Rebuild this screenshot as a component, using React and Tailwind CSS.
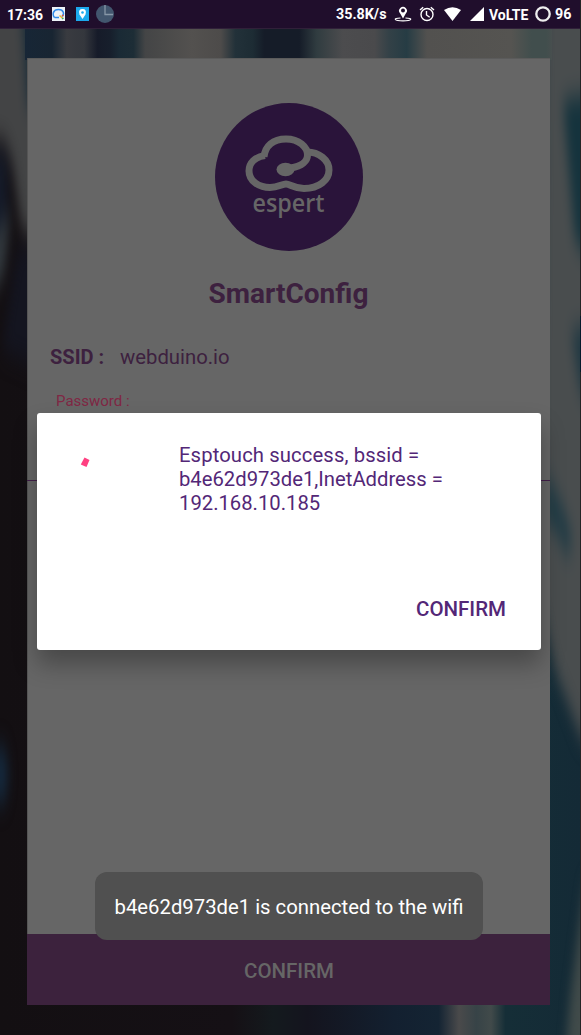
function Backdrop() {
  return (
    <svg className="absolute inset-0 h-full w-full" viewBox="0 0 581 1035" aria-hidden="true">
      <defs>
        <filter id="soft" x="-100%" y="-20%" width="300%" height="140%" colorInterpolationFilters="sRGB"><feGaussianBlur stdDeviation="5 12" /></filter>
        <linearGradient id="base" x1="0" x2="581" y1="0" y2="0" gradientUnits="userSpaceOnUse">
          <stop offset="0" stopColor="#130f12" />
          <stop offset=".4" stopColor="#151015" />
          <stop offset=".47" stopColor="#141a1e" />
          <stop offset=".53" stopColor="#14141e" />
          <stop offset=".68" stopColor="#132030" />
          <stop offset=".755" stopColor="#142433" />
          <stop offset=".79" stopColor="#4a4a4b" />
          <stop offset=".82" stopColor="#374347" />
          <stop offset=".845" stopColor="#414a4a" />
          <stop offset=".87" stopColor="#152e37" />
          <stop offset="1" stopColor="#142a36" />
        </linearGradient>
        <linearGradient id="top" x1="0" x2="581" y1="0" y2="0" gradientUnits="userSpaceOnUse">
          <stop offset="0" stopColor="#3d3e41" />
          <stop offset=".024" stopColor="#454545" />
          <stop offset=".04" stopColor="#172636" />
          <stop offset=".09" stopColor="#182532" />
          <stop offset=".115" stopColor="#393b40" />
          <stop offset=".145" stopColor="#34373d" />
          <stop offset=".168" stopColor="#161b29" />
          <stop offset=".19" stopColor="#171f2c" />
          <stop offset=".205" stopColor="#1a2a35" />
          <stop offset=".23" stopColor="#1d2d36" />
          <stop offset=".25" stopColor="#444546" />
          <stop offset=".33" stopColor="#53514f" />
          <stop offset=".38" stopColor="#4d4b4a" />
          <stop offset=".405" stopColor="#223139" />
          <stop offset=".435" stopColor="#1d2c34" />
          <stop offset=".455" stopColor="#151c28" />
          <stop offset=".515" stopColor="#151c28" />
          <stop offset=".545" stopColor="#303c40" />
          <stop offset=".59" stopColor="#4c4c4e" />
          <stop offset=".645" stopColor="#4a4a4c" />
          <stop offset=".67" stopColor="#334147" />
          <stop offset=".7" stopColor="#263c44" />
          <stop offset=".735" stopColor="#52514f" />
          <stop offset=".88" stopColor="#555451" />
          <stop offset=".915" stopColor="#414e4d" />
          <stop offset=".94" stopColor="#414e4d" />
          <stop offset=".96" stopColor="#4f5050" />
          <stop offset="1" stopColor="#525253" />
        </linearGradient>
      </defs>
      <rect width="581" height="1035" fill="url(#base)" />
      <g filter="url(#soft)">
        <path d="M-20 -20H45V240L22 230 12 160 4 140H-20Z" fill="#434445" />
        <path d="M20 -20H45V105L28 110Z" fill="#172b38" />
        <path d="M-20 150 7 155 8 220 -3 260H-20Z" fill="#151b29" />
        <path d="M11 210 4 275 -12 300V245Z" fill="#333a3f" />
        <path d="M18 247H45V370L2 350Z" fill="#141520" />
        <path d="M545 -20H610V765L580 735 555 670 540 600Z" fill="#494d4e" />
        <path d="M563 100 610 90V285L575 240Z" fill="#15333d" />
        <path d="M571 330 610 320V435L580 390Z" fill="#203842" />
        <path d="M545 470 562 505 572 535 569 560 558 535 545 520Z" fill="#203b45" />
        <ellipse cx="0" cy="775" rx="8" ry="30" fill="#15293d" />
        <path d="M585 885 570 1000 565 1060H610V885Z" fill="#414b4a" />
      </g>
      <rect x="25" width="527" height="60" fill="url(#top)" />
      <path d="M580 0V1035H581V0Z" fill="#242526" />
      <path d="M580 316h1v56h-1z" fill="#071a2b" />
    </svg>
  );
}

function StatusBar() {
  return (
    <header className="relative flex h-[29px] w-[580px] shrink-0 items-center justify-between border-b border-[#302039] bg-[#200e2c] text-[14.5px] font-bold leading-none text-white">
      <div className="flex items-center pl-[7px]">
        <span className="w-[45px] whitespace-nowrap pt-px text-[14px]">17:36</span>
        <svg className="h-[14px] w-[13px]" viewBox="0 0 13 14">
          <path fill="#eef3f8" d="M0 0h13v14H0z" />
          <path d="M2.500 10.500C0 7.500 1 2.500 6.500 2.500c5.500 0 6 5 3.500 7M2.500 10.500h4.500" fill="none" stroke="#318be8" strokeWidth="1.500" />
          <path d="m7.500 8.500 3 2.500" stroke="#eab52e" strokeWidth="1.600" />
          <path d="m10 8 1.500 1" stroke="#e64c3d" strokeWidth="1.300" />
          <path d="m10 12 1.500-1" stroke="#38a85a" strokeWidth="1.300" />
        </svg>
        <svg className="ml-[11px] h-[14px] w-[13px]" viewBox="0 0 13 14">
          <path fill="#1ca9ed" d="M0 0h13v14H0z" />
          <path d="M6.500 12 3.500 7.500Q1.800 2 6.500 2t3 5.500Z" fill="white" />
          <circle cx="6.500" cy="5.500" r="1.300" fill="#1ca9ed" />
        </svg>
        <svg className="ml-[7px] h-[18px] w-[18px]" viewBox="0 0 18 18">
          <circle cx="9" cy="9" r="9" fill="#42566e" />
          <path d="M9 0v9.500h8" fill="none" stroke="#8797a7" strokeWidth="1.300" />
        </svg>
      </div>
      <div className="flex items-center pr-[8px]">
        <span className="w-[58px] whitespace-nowrap pt-px text-[14.3px]">35.8K/s</span>
        <svg className="h-4 w-[18px]" viewBox="0 0 18 16" fill="none" stroke="white">
          <path d="M9 12.500 6.200 7.500a3.900 3.900 0 1 1 5.600 0Z" fill="white" stroke="none" />
          <circle cx="9" cy="4.600" r="2" fill="#200e2c" stroke="none" />
          <path d="M6.500 12C-1.500 12.200 0 14.900 9 14.900s10.500-2.700 2.500-2.900" strokeWidth="1.200" />
        </svg>
        <svg className="ml-[7px] h-4 w-4" viewBox="0 0 16 16" fill="none" stroke="white" strokeWidth="1.400">
          <circle cx="8" cy="8.500" r="6" /><path d="M1 4 4.200 1.200M11.800 1.200 15 4M7.500 5v4l3.200 2.300" />
        </svg>
        <svg className="ml-[9px] h-[14px] w-[17px]" viewBox="0 0 17 14"><path fill="white" d="M0 3Q8.500-2.500 17 3L8.500 14Z" /></svg>
        <svg className="ml-[9px] h-[14px] w-[14px]" viewBox="0 0 14 14"><path fill="white" d="M14 0v14H0Z" /></svg>
        <span className="ml-[5px] w-[40px] whitespace-nowrap pt-px text-[14px]">VoLTE</span>
        <svg className="ml-[6px] h-4 w-4" viewBox="0 0 16 16"><circle cx="8" cy="8" r="6.700" fill="none" stroke="#eee" strokeWidth="2.300" /></svg>
        <span className="ml-1 w-[17px] whitespace-nowrap pt-px text-[14.3px]">96</span>
      </div>
    </header>
  );
}

function Logo() {
  return (
    <svg className="mx-auto h-[148px] w-[148px] shrink-0" viewBox="0 0 148 148">
      <circle cx="74" cy="74" r="74" fill="#2a143a" />
      <g fill="none" stroke="#666" strokeWidth="7" strokeLinejoin="round">
        <path d="M49 54C50 43 58 36 71 36C84 36 92.500 44 92.500 52C92.500 58 87 63 76 65" />
        <path d="M50 52.500C40 54 34 60 34 68C34 78 44 84.500 55 84.500C63 84.500 67 81 71 81C75 81 79 85.500 89 85.500C104 85.500 114 77 114 67C114 57 104 49 92 49" />
      </g>
      <ellipse cx="70.500" cy="66.500" rx="9" ry="6.800" fill="#666" />
      <text x="73.500" y="109" textAnchor="middle" className="font-['Open_Sans']" fontSize="24.500" fontWeight="600" fill="#666" textLength="72" lengthAdjust="spacingAndGlyphs">espert</text>
    </svg>
  );
}

export default function App() {
  return (
    <div className="relative flex h-[1035px] w-[581px] flex-col overflow-hidden bg-[#130e13] font-['Roboto',sans-serif]">
      <Backdrop />
      <StatusBar />
      <main className="relative ml-[27px] mt-[29px] flex h-[947px] w-[523px] shrink-0 flex-col bg-[#666] pt-[45px] shadow-[inset_1px_0_0_#555,inset_0_1px_0_#5b5b5b]">
        <Logo />
        <h1 className="mt-[25px] text-center text-[28px] font-bold leading-9 text-[#3d213f]">SmartConfig</h1>
        <div className="mt-[31px] flex h-7 items-center pl-[23px] text-[20px] leading-7 text-[#3d213f]">
          <span className="w-[70px] shrink-0 whitespace-nowrap font-bold">SSID :</span>
          <span className="whitespace-nowrap text-[20.3px]">webduino.io</span>
        </div>
        <label className="ml-[29px] mt-5 block text-[15px] leading-5 text-[#802744]">Password :</label>
        <div className="mt-[69px] h-px bg-[#43204a]" />
        <button className="mt-auto h-[71px] w-full shrink-0 bg-[#3c223d] pl-px pt-[3px] text-[20.5px] font-medium text-[#666]">CONFIRM</button>
      </main>
      <section role="dialog" className="absolute left-[37px] top-[413px] flex h-[237px] w-[504px] flex-col rounded-[3px] bg-white text-[#532777] shadow-[0_14px_24px_rgba(0,0,0,0.3)]">
        <div className="flex pt-[30px]">
          <div className="w-[142px] shrink-0 pl-[43px] pt-[13px]">
            <svg className="h-3 w-3" viewBox="0 0 12 12"><path d="M4.500 1.500 9.500 4 6.500 11 .800 8.500Z" fill="#ff4081" /></svg>
          </div>
          <p className="whitespace-nowrap text-[20.25px] leading-6"><span className="tracking-[0.11px]">Esptouch success, bssid =</span><br />b4e62d973de1,InetAddress =<br />192.168.10.185</p>
        </div>
        <button className="mb-[27px] mr-[35px] mt-auto self-end text-[20.5px] font-medium leading-7">CONFIRM</button>
      </section>
      <div role="status" className="absolute left-[95px] top-[872px] flex h-[68px] w-[388px] items-center justify-center whitespace-nowrap rounded-[12px] bg-[#505050] pt-[2px] text-[20.3px] text-white">b4e62d973de1 is connected to the wifi</div>
    </div>
  );
}
